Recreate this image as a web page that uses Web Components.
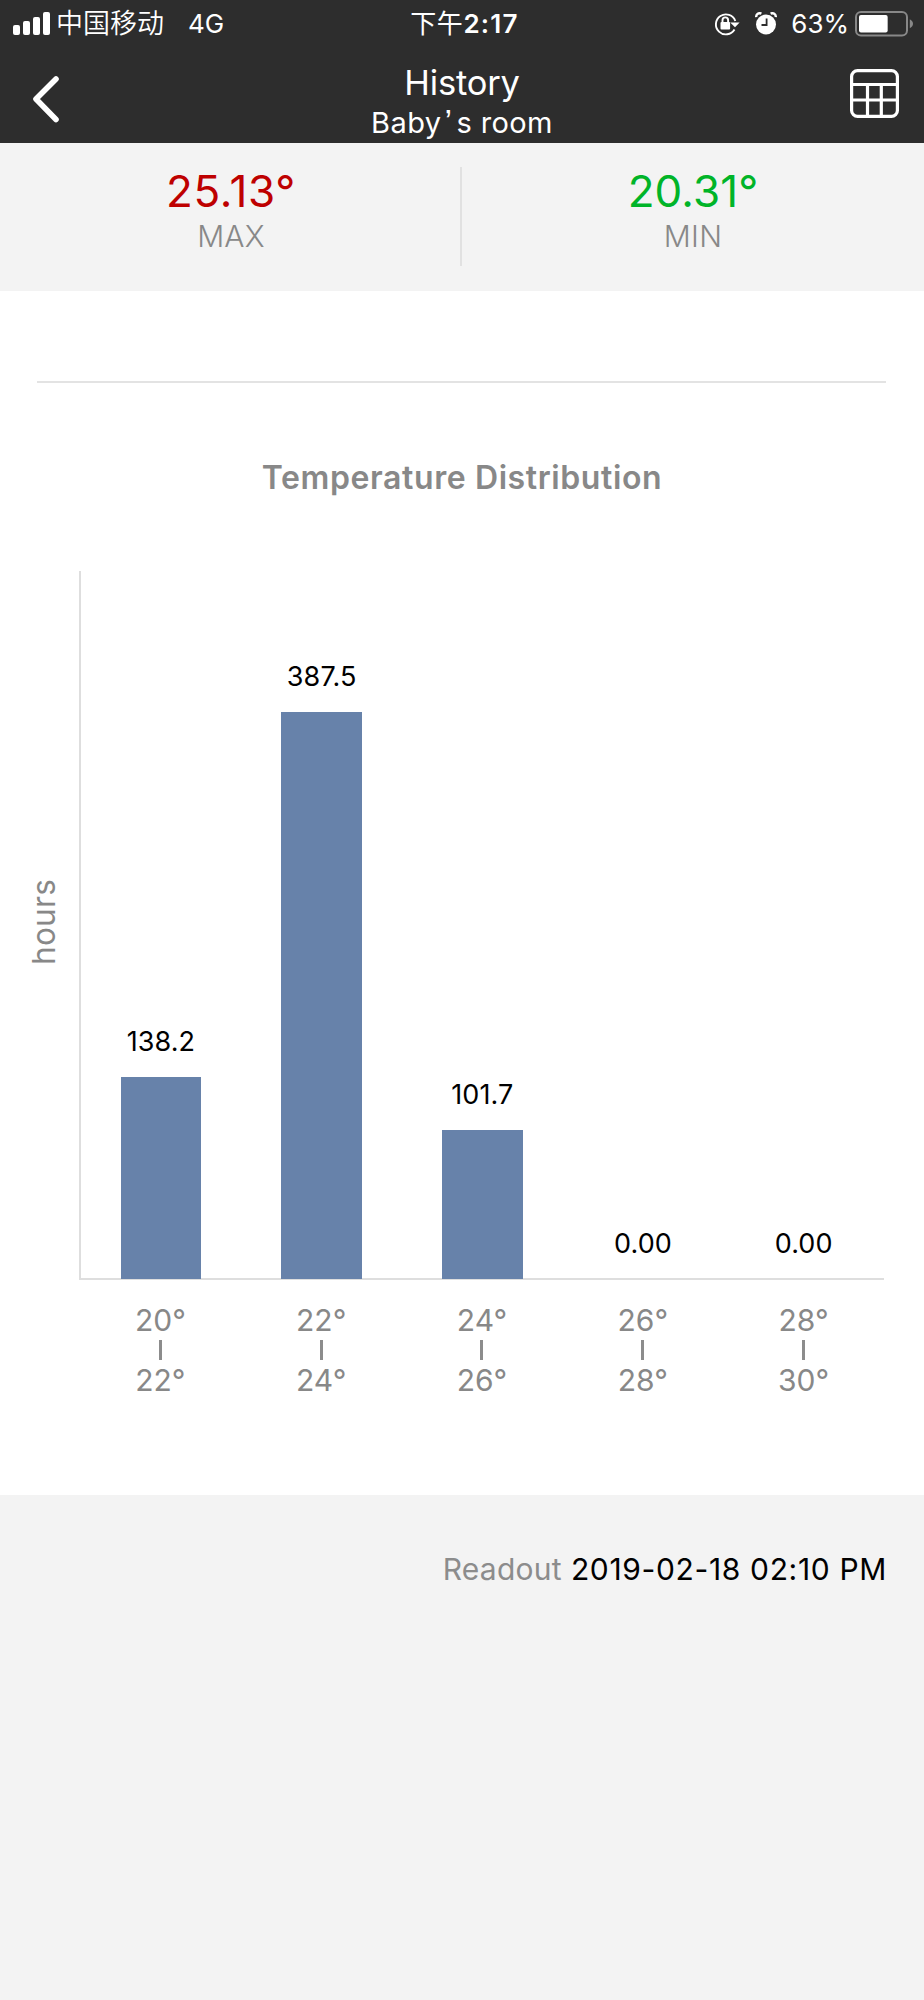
<!DOCTYPE html>
<html lang="en">
<head>
<meta charset="utf-8">
<title>History</title>
<style>
  body {
    margin: 0;
    background-color: #f3f3f3;
    font-family: Inter, "Noto Sans CJK SC", sans-serif;
    color: #000;
  }
</style>
</head>
<body>
<history-page></history-page>

<script>
"use strict";

/* Status bar of the phone */
class StatusBar extends HTMLElement {
  constructor() {
    super();
    this.attachShadow({ mode: 'open' });
  }

  connectedCallback() {
    const battery = Number(this.getAttribute('battery') || 100);
    this.shadowRoot.innerHTML = `
<style>
:host {
  display: grid;
  grid-template-columns: 1fr auto 1fr;
  align-items: center;
  height: 46px;
  padding: 0 11px 1px 13px;
  font-size: 26px;
  line-height: 44px;
  color: #fff;
}
svg { display: block; }
.left, .right { display: flex; align-items: center; }
.right { justify-content: flex-end; }
.carrier {
  margin-left: 6px;
  font-family: "Noto Sans CJK SC", sans-serif;
  font-size: 27px;
  font-weight: 350;
  line-height: 40px;
  padding-bottom: 4px;
}
.network { margin-left: 24px; padding-bottom: 1px; }
.time { font-weight: 600; letter-spacing: 1.2px; padding: 0 0 2px 3px; }
.time span {
  font-family: "Noto Sans CJK SC", sans-serif;
  font-weight: 400;
  letter-spacing: 0.5px;
}
.alarm { margin: 0 14px 0 15px; }
.percent { margin-right: 6px; padding-bottom: 1px; }
</style>
<div class="left">
  <svg width="37" height="24" viewBox="0 0 37 24" fill="#fff">
    <rect x="0" y="13" width="7" height="10" rx="2"/>
    <rect x="10" y="9" width="7" height="14" rx="2"/>
    <rect x="20" y="5" width="7" height="18" rx="2"/>
    <rect x="30" y="0" width="7" height="23" rx="2"/>
  </svg>
  <span class="carrier">${this.getAttribute('carrier')}</span>
  <span class="network">${this.getAttribute('network')}</span>
</div>
<div class="time"><span>${this.getAttribute('period')}</span>${this.getAttribute('time')}</div>
<div class="right">
  <svg width="26" height="24" viewBox="0 0 26 24" fill="none" stroke="#fff" stroke-width="1.9">
    <path d="M20.5 17.5A10 10 0 1 1 21.3 9"/>
    <path d="M16.2 10.4H25.6L21 15.2Z" fill="#fff" stroke="none"/>
    <rect x="6.5" y="10" width="9.6" height="7.5" rx="1" fill="#fff" stroke="none"/>
    <path d="M8.5 10.5V8.2a2.8 2.8 0 0 1 5.6 0V10.5"/>
  </svg>
  <svg class="alarm" width="22" height="24" viewBox="0 0 22 24">
    <circle cx="11" cy="12.5" r="10" fill="#fff"/>
    <path d="M1.2 5.2A3.6 3.6 0 0 1 6.4 1.6M15.6 1.6A3.6 3.6 0 0 1 20.8 5.2" fill="none" stroke="#fff" stroke-width="2.4"/>
    <path d="M11.6 6.5V13H6.5" fill="none" stroke="#2d2d2d" stroke-width="1.8"/>
  </svg>
  <span class="percent">${battery}%</span>
  <svg width="58" height="26" viewBox="0 0 58 26">
    <rect x="1" y="1" width="51" height="23.5" rx="5" fill="none" stroke="#888" stroke-width="2"/>
    <rect x="4" y="4" width="${45.5 * battery / 100}" height="17.5" rx="2" fill="#fff"/>
    <path d="M54.8 8.3Q58 10 58 12.8T54.8 17.3Z" fill="#888"/>
  </svg>
</div>`;
  }
}
customElements.define('status-bar', StatusBar);

/* Title bar: back arrow, two lines of title, table button */
class NavBar extends HTMLElement {
  constructor() {
    super();
    this.attachShadow({ mode: 'open' });
    this.shadowRoot.innerHTML = `
<style>
:host {
  display: grid;
  grid-template-columns: 60px 1fr 60px;
  height: 80px;
  padding: 16px 14px 0 14px;
  color: #fff;
  text-align: center;
}
.back { margin: 12px 0 0 17px; }
.table { margin: 6px 11px 0 0; justify-self: end; }
.title { font-size: 34.5px; line-height: 40px; letter-spacing: -0.2px; }
.subtitle { font-size: 29px; line-height: 40px; letter-spacing: 0.4px; }
</style>
<svg class="back" width="30" height="50" viewBox="0 0 30 50" fill="none" stroke="#fff" stroke-width="5.6" stroke-linecap="round" stroke-linejoin="round">
  <path d="M25 4L5 24L25 44.5"/>
</svg>
<div>
  <div class="title"><slot name="title"></slot></div>
  <div class="subtitle"><slot></slot></div>
</div>
<svg class="table" width="49" height="49" viewBox="0 0 49 49" fill="none" stroke="#fff" stroke-width="3.2">
  <rect x="1.6" y="1.6" width="45.8" height="45.8" rx="6"/>
  <path d="M2 15.5H47M2 31H47M17.5 15.5V47M31.3 15.5V47"/>
</svg>`;
  }
}
customElements.define('nav-bar', NavBar);

/* One value with its caption */
class StatValue extends HTMLElement {
  constructor() {
    super();
    this.attachShadow({ mode: 'open' });
  }

  connectedCallback() {
    this.shadowRoot.innerHTML = `
<style>
:host { display: block; flex: 1; text-align: center; }
.value {
  font-size: 44px;
  line-height: 48px;
  letter-spacing: var(--spacing, 0);
  color: ${this.getAttribute('color')};
}
.label { font-size: 30px; line-height: 42px; letter-spacing: 0.2px; color: #888; font-weight: 350; }
</style>
<div class="value">${this.getAttribute('value')}</div>
<div class="label"><slot></slot></div>`;
  }
}
customElements.define('stat-value', StatValue);

/* Bar chart. The bars come from the "data" attribute: from,to,hours;... */
class BarChart extends HTMLElement {
  constructor() {
    super();
    this.attachShadow({ mode: 'open' });
  }

  connectedCallback() {
    const pxPerHour = 1.4635;
    const rows = this.getAttribute('data').split(';').map(r => r.split(','));
    const bars = rows.map(r => `
      <div class="col">
        <span class="value">${r[2]}</span>
        <div class="bar" style="height:${(r[2] * pxPerHour).toFixed(1)}px"></div>
      </div>`).join('');
    const labels = rows.map(r => `
      <div class="range"><span>${r[0]}°</span><i></i><span>${r[1]}°</span></div>`).join('');

    this.shadowRoot.innerHTML = `
<style>
:host {
  display: grid;
  grid-template-columns: 80px 804px;
  grid-template-rows: 709px auto;
}
.unit {
  writing-mode: vertical-rl;
  transform: rotate(180deg);
  justify-self: start;
  margin: 0 0 8px 24px;
  line-height: 40px;
  text-align: center;
  font-size: 31.5px;
  letter-spacing: 0.3px;
  color: #888;
}
/* both axes are background stripes, so the columns keep the full width */
.plot {
  display: flex;
  margin-left: -1px;
  padding: 0 0 1px 1.6px;
  background:
    linear-gradient(#dedede, #dedede) left / 2px 100% no-repeat,
    linear-gradient(#dedede, #dedede) bottom / 100% 2px no-repeat;
}
.col {
  flex: 1;
  display: flex;
  flex-direction: column;
  justify-content: flex-end;
  align-items: center;
}
.value { font-size: 27px; line-height: 32px; margin-bottom: 19px; letter-spacing: 0.1px; }
.bar { width: 80.4px; background-color: #6782aa; }
.ranges {
  grid-column: 2;
  display: flex;
  padding-top: 20px;
}
.range {
  flex: 1;
  display: flex;
  flex-direction: column;
  align-items: center;
  font-size: 30px;
  line-height: 40px;
  color: #888;
}
.range i { width: 3px; height: 20px; background-color: #8c8c8c; }
</style>
<div class="unit">${this.getAttribute('unit')}</div>
<div class="plot">${bars}</div>
<div class="ranges">${labels}</div>`;
  }
}
customElements.define('bar-chart', BarChart);

/* The whole screen */
class HistoryPage extends HTMLElement {
  constructor() {
    super();
    this.attachShadow({ mode: 'open' });
    this.shadowRoot.innerHTML = `
<style>
:host { display: block; width: 924px; height: 2000px; overflow: hidden; background-color: #f3f3f3; }
header { background-color: #2d2d2d; }
.quote { font-family: "Liberation Sans", sans-serif; font-size: 34px; line-height: 0; padding: 0 4px 0 3px; }
.stats { display: flex; height: 124px; padding-top: 24px; }
.stats i { width: 2px; height: 99px; background-color: #e1e1e1; margin-left: -2px; }
.max { --spacing: 0.7px; }
.min { --spacing: 0.1px; }
main { height: 1204px; background-color: #fff; display: flow-root; }
hr { margin: 90px 38px 0 37px; height: 2px; border: none; background-color: #e3e3e3; }
h2 {
  margin: 72px 0 71px;
  font-size: 32px;
  line-height: 45px;
  font-weight: 600;
  letter-spacing: 0.6px;
  color: #888;
  text-align: center;
}
.readout { margin: 54px 37px 0 0; text-align: right; font-size: 30px; line-height: 40px; letter-spacing: 0.65px; }
.readout span { color: #8c8c8c; letter-spacing: 0.25px; }
</style>
<header>
  <status-bar carrier="中国移动" network="4G" period="下午" time="2:17" battery="63"></status-bar>
  <nav-bar><span slot="title">History</span>Baby<span class="quote">’</span>s room</nav-bar>
</header>
<section class="stats">
  <stat-value class="max" value="25.13°" color="#be0000">MAX</stat-value>
  <i></i>
  <stat-value class="min" value="20.31°" color="#00b428">MIN</stat-value>
</section>
<main>
  <hr>
  <h2>Temperature Distribution</h2>
  <bar-chart unit="hours" data="20,22,138.2;22,24,387.5;24,26,101.7;26,28,0.00;28,30,0.00"></bar-chart>
</main>
<div class="readout"><span>Readout</span> 2019-02-18 02:10 PM</div>`;
  }
}
customElements.define('history-page', HistoryPage);
</script>
</body>
</html>
